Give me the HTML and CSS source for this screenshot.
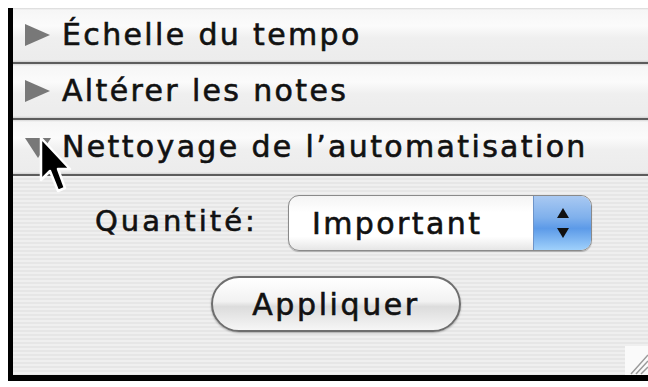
FILE: index.html
```html
<!DOCTYPE html>
<html lang="fr">
<head>
<meta charset="utf-8">
<link rel="stylesheet" href="styles.css">
</head>
<body>
<div class="panel">
  <div class="row">
    <span class="tri tri-right"></span>
    <span class="row-label">Échelle du tempo</span>
  </div>
  <div class="row">
    <span class="tri tri-right"></span>
    <span class="row-label">Altérer les notes</span>
  </div>
  <div class="row">
    <span class="tri tri-down"></span>
    <span class="row-label">Nettoyage de l’automatisation</span>
  </div>
  <div class="content">
    <div class="field">
      <span class="field-label">Quantité:</span>
      <div class="popup">
        <span class="popup-text">Important</span>
        <span class="popup-arrows">
          <svg width="14" height="32" viewBox="0 0 14 32"><path d="M7 1 L13 11 L1 11 Z" fill="#111"/><path d="M1 21 L13 21 L7 31 Z" fill="#111"/></svg>
        </span>
      </div>
    </div>
    <div class="btn-row">
      <div class="button">Appliquer</div>
    </div>
    <div class="grip">
      <svg width="23" height="29" viewBox="0 0 23 29"><path d="M23 9 L6 28 M23 15 L11 28 M23 21 L16 28" stroke="#9a9a9a" stroke-width="1.5"/></svg>
    </div>
  </div>
  <svg class="cursor" width="34" height="62" viewBox="0 0 34 62">
    <path d="M3 2 L3 44 L12 35 L20 55 L27 52 L20 33 L32 33 Z" fill="#000" stroke="#fff" stroke-width="2.5" stroke-linejoin="round"/>
  </svg>
</div>
</body>
</html>
```
FILE: styles.css
```css
html, body {
  margin: 0;
  padding: 0;
  background: #ffffff;
  width: 648px;
  height: 387px;
  overflow: hidden;
}
.panel {
  position: relative;
  margin: 8px 0 0 8px;
  height: 373px;
  border-left: 5px solid #000;
  border-bottom: 6px solid #000;
  box-sizing: border-box;
  background: repeating-linear-gradient(to bottom, #efefef 0, #efefef 2px, #e6e6e6 2px, #e6e6e6 4px);
  font-family: "DejaVu Sans", "Liberation Sans", sans-serif;
  color: #111;
  display: flex;
  flex-direction: column;
  -webkit-text-stroke: 0.6px #111;
}
.row {
  height: 54px;
  border-bottom: 2px solid #5c5c5c;
  background: linear-gradient(to bottom, #d8d8d8 0, #f6f6f6 2px, #fbfbfb 18px, #efefef 30px, #ececec 52px, #cfcfcf 54px);
  display: flex;
  align-items: center;
  flex-shrink: 0;
}
.tri {
  width: 0;
  height: 0;
  margin-left: 12px;
  margin-right: 12px;
}
.tri-right {
  border-top: 11px solid transparent;
  border-bottom: 11px solid transparent;
  border-left: 25px solid #787878;
}
.tri-down {
  border-left: 13px solid transparent;
  border-right: 13px solid transparent;
  border-top: 20px solid #787878;
  margin-right: 11px;
  margin-top: 2px;
}
.row-label {
  font-size: 30px;
  letter-spacing: 2.35px;
  line-height: 1;
}
.content {
  flex: 1;
  position: relative;
  padding: 19px 0 0 82px;
}
.field {
  display: flex;
  align-items: center;
}
.field-label {
  font-size: 29px;
  letter-spacing: 3px;
  width: 193px;
  padding-bottom: 4px;
}
.popup {
  width: 304px;
  height: 56px;
  box-sizing: border-box;
  border: 1.5px solid #8a8a8a;
  border-radius: 11px;
  background: linear-gradient(to bottom, #f4f4f4 0, #ffffff 30%, #ffffff 75%, #e6e6e6 100%);
  display: flex;
  overflow: hidden;
  box-shadow: 0 1px 1px rgba(0,0,0,0.25);
}
.popup-text {
  flex: 1;
  font-size: 30px;
  letter-spacing: 2.4px;
  padding-left: 23px;
  display: flex;
  align-items: center;
}
.popup-arrows {
  width: 57px;
  background: linear-gradient(to bottom, #a9c9f2 0, #7fb0ec 40%, #5c9ae8 60%, #9fd0fb 100%);
  border-left: 1px solid #6d94c9;
  display: flex;
  align-items: center;
  justify-content: center;
}
.btn-row {
  padding-left: 116px;
  margin-top: 25px;
}
.button {
  width: 250px;
  height: 56px;
  box-sizing: border-box;
  border: 2px solid #6e6e6e;
  border-radius: 28px;
  background: linear-gradient(to bottom, #ffffff 0, #f2f2f2 45%, #dcdcdc 55%, #f6f6f6 100%);
  font-size: 30px;
  letter-spacing: 2.6px;
  display: flex;
  align-items: center;
  justify-content: center;
  box-shadow: 0 1px 2px rgba(0,0,0,0.3);
}
.grip {
  position: absolute;
  right: 0;
  bottom: 0;
  width: 23px;
  height: 29px;
  background: #fafafa;
}
.grip svg { display: block; }
.cursor {
  position: absolute;
  left: 25px;
  top: 128px;
}
```
